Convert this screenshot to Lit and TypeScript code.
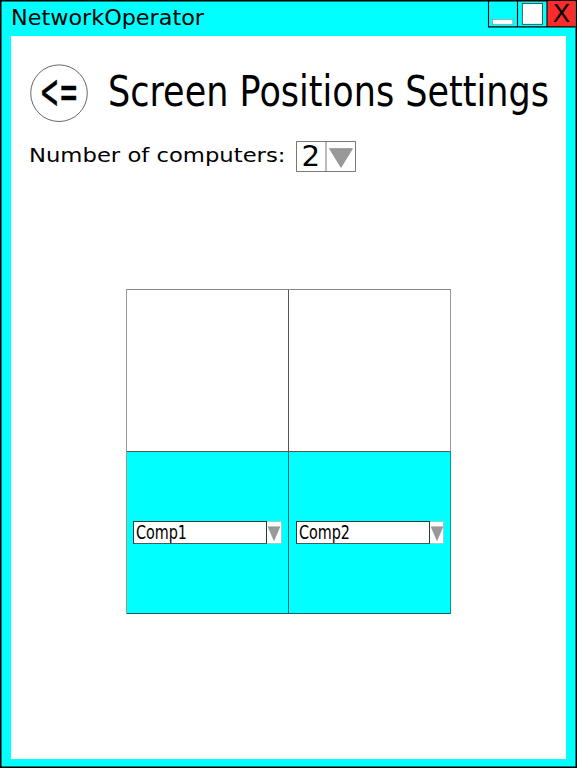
import { LitElement, html, svg, css } from "lit";
import { customElement, property } from "lit/decorators.js";

/** A line of text fitted to a fixed width; stretch is its horizontal scale. */
@customElement("fit-text")
class FitText extends LitElement {
  @property() text = "";
  @property({ type: Number }) width = 100;
  @property({ type: Number }) height = 20;
  @property({ type: Number }) size = 16;
  @property({ type: Number }) base = 16;
  @property({ type: Number }) stretch = 1;

  static styles = css`
    :host { display: block; flex: none; }
    svg { display: block; overflow: visible; }
    text { font-family: "DejaVu Sans", sans-serif; fill: #000; }
  `;

  render() {
    return html`<svg width=${this.width} height=${this.height}>
      ${svg`<text x="0" y=${this.base} transform=${`scale(${this.stretch} 1)`} font-size=${this.size} textLength=${this.width / this.stretch} lengthAdjust="spacingAndGlyphs">${this.text}</text>`}
    </svg>`;
  }
}

@customElement("comp-select")
class CompSelect extends LitElement {
  @property() value = "";

  static styles = css`
    :host { display: block; width: 149px; }
    svg { display: block; overflow: visible; }
    .row { display: flex; height: 23px; }
    .field {
      box-sizing: border-box; flex: none; width: 134px; height: 23px; padding-left: 2px;
      background: #fff; border: 1px solid #203c3c; border-bottom-color: #4a5a5a;
    }
    .arrow {
      box-sizing: border-box; flex: 1; height: 23px; background: #fff;
      border: 1px solid #9cc; border-left: 0;
    }
  `;

  render() {
    return html`<div class="row">
      <div class="field">
        <fit-text text=${this.value} width="51" height="21" size="20" base="17.3" stretch=".72"></fit-text>
      </div>
      <div class="arrow">
        <svg width="13" height="21"><path d="M1 4.7H13L7 18.7Z" fill="#999" stroke="#808080" stroke-width=".4" /></svg>
      </div>
    </div>`;
  }
}

@customElement("app-root")
class AppRoot extends LitElement {
  static styles = css`
    :host { display: block; width: 577px; height: 768px; }
    svg { display: block; overflow: visible; }
    .window {
      box-sizing: border-box; width: 577px; height: 768px;
      display: flex; flex-direction: column;
      background: #0ff; border: 1px solid #000; box-shadow: inset 0 0 0 .5px #000;
    }
    .titlebar { display: flex; justify-content: space-between; height: 35px; padding-left: 9.6px; flex: none; }
    .page {
      flex: 1; margin: 0 10px 8px; background: #fff;
      display: flex; flex-direction: column;
    }
    .heading { display: flex; padding: 28px 0 0 19px; height: 58px; gap: 20.4px; }
    .count { display: flex; padding: 19px 0 0 17.6px; height: 31px; gap: 11px; }
    .grid {
      display: grid; grid-template-columns: 162px 162px; grid-template-rows: 162px 162px;
      margin: 117px 0 0 115px; width: 324px;
      border: 1px solid #888; border-width: 1px 0 0 1px; border-left-color: #999;
    }
    .cell {
      box-sizing: border-box; border: 1px solid #555; border-width: 0 1px 1px 0;
      display: flex; align-items: center; padding-left: 6px;
    }
    .cell:nth-child(even) { border-right-color: #999; }
    .used { background: #0ff; border-color: #066; }
    .used:nth-child(even) { border-right-color: #099; padding-left: 7px; }
    .used:nth-child(even) comp-select { width: 148px; }
  `;

  render() {
    return html`<div class="window">
      <div class="titlebar">
        <fit-text text="NetworkOperator" width="193" height="34" size="22" base="24.2" stretch="1.014"></fit-text>
        <svg width="88" height="27">
          <rect x="59" y="0" width="28.5" height="26" fill="#ff2a2a" />
          <path d="M.5 0V25.9H87.5M29.5 0V26M59 0V26" fill="none" stroke="#000" stroke-width="1.1" />
          <rect x="4.5" y="18.3" width="20.3" height="5.2" fill="#fff" stroke="#888" stroke-width=".6" />
          <rect x="34.3" y="2.5" width="20.2" height="20.8" fill="#fff" stroke="#333" stroke-width=".8" />
          <text x="64.4" y="21.4" font-family="DejaVu Sans, sans-serif" font-size="24" textLength="17.8" lengthAdjust="spacingAndGlyphs">X</text>
        </svg>
      </div>
      <div class="page">
        <div class="heading">
          <svg width="58" height="58">
            <circle cx="29" cy="29.2" r="28.3" fill="#fff" stroke="#000" stroke-width=".6" />
            <text transform="translate(9.7 43.8) scale(.483 1)" font-family="DejaVu Sans, sans-serif" font-size="48" textLength="80.4" lengthAdjust="spacingAndGlyphs" stroke="#000" stroke-width=".6">&lt;=</text>
          </svg>
          <fit-text text="Screen Positions Settings" width="441" height="58" size="43.2" base="42.3" stretch=".807"></fit-text>
        </div>
        <div class="count">
          <fit-text text="Number of computers:" width="256.4" height="31" size="19.9" base="20.7" stretch="1.14"></fit-text>
          <svg width="60" height="31">
            <path d="M.5 .5H59.5V30.5H.5ZM30 .5V30.5" fill="#fff" stroke="#555" stroke-width=".8" />
            <text x="5.6" y="24.7" font-family="DejaVu Sans, sans-serif" font-size="28" textLength="18.6" lengthAdjust="spacingAndGlyphs">2</text>
            <path d="M33.4 7.6H56.6L45 26.4Z" fill="#999" stroke="#777" stroke-width=".5" />
          </svg>
        </div>
        <div class="grid">
          <div class="cell"></div>
          <div class="cell"></div>
          <div class="cell used"><comp-select value="Comp1"></comp-select></div>
          <div class="cell used"><comp-select value="Comp2"></comp-select></div>
        </div>
      </div>
    </div>`;
  }
}
